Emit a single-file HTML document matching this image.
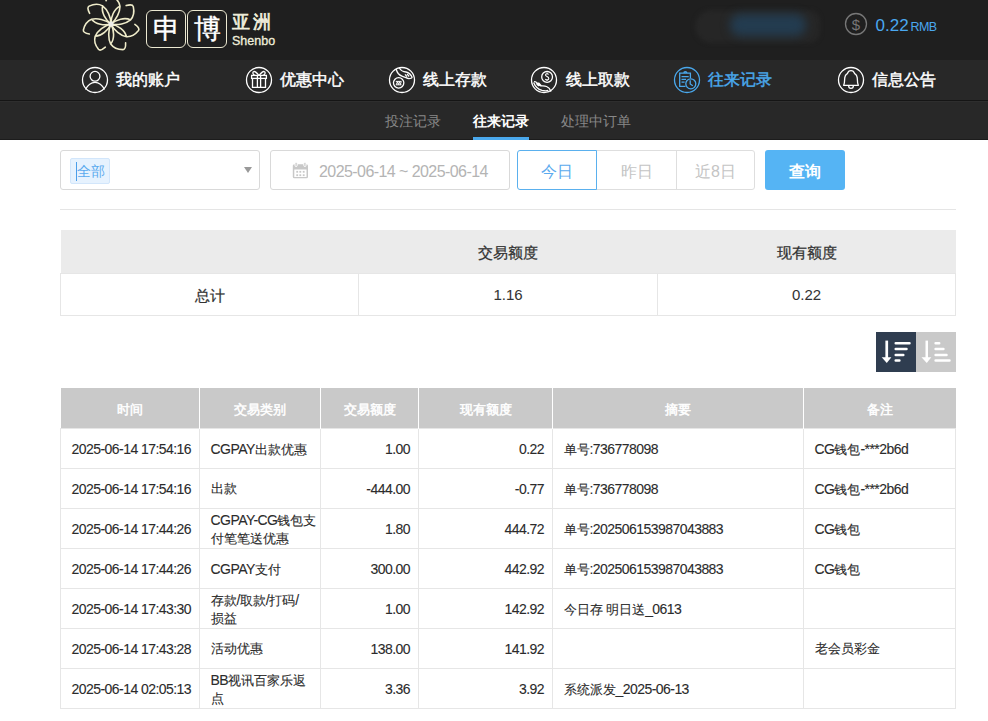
<!DOCTYPE html>
<html><head><meta charset="utf-8">
<style>
*{margin:0;padding:0;box-sizing:border-box}
html,body{width:988px;height:721px;overflow:hidden;background:#fff}
body{font-family:"Liberation Sans",sans-serif;position:relative;color:#333}
.abs{position:absolute}
#hdr{left:0;top:0;width:988px;height:60px;background:#1f1f1f}
#nav{left:0;top:60px;width:988px;height:40px;background:#282828}
#navline{left:0;top:100px;width:988px;height:1px;background:#151515}
#navline2{left:0;top:101px;width:988px;height:1px;background:#2e2e2e}
#sub{left:0;top:102px;width:988px;height:38px;background:#282828}
.box{border:1.3px solid #ece9d2;border-radius:6px;width:40px;height:37.5px;top:10px}
.logoch{color:#fff;font-size:27px;font-weight:normal;-webkit-text-stroke:0.4px #fff;top:11px;line-height:36px;width:40px;text-align:center}
.navi{top:62px;height:36px;line-height:36px;font-size:16px;font-weight:normal;-webkit-text-stroke:0.45px currentColor;color:#fff;white-space:nowrap}
.navi svg{position:absolute;left:0;top:4px}
.navi span{position:absolute;top:0}
.subi{top:102px;height:39px;line-height:39px;font-size:14px;color:#888;white-space:nowrap}
.sel{border:1px solid #d9d9d9;border-radius:3px;height:40px;top:150px}
.btn{top:150px;height:40px;line-height:41px;text-align:center;font-size:16px;color:#c4c4c4;border:1px solid #dedede}
table{border-collapse:collapse;position:absolute;table-layout:fixed}
#sum{left:60px;top:230px;width:895px}
#sum th{-webkit-text-stroke:0.25px #333;background:#ebebeb;height:43px;padding-top:4px;font-size:15px;font-weight:normal;color:#333;text-align:center}
#sum td{-webkit-text-stroke:0.25px #333;height:42px;padding-top:4px;border:1px solid #e6e6e6;font-size:15px;text-align:center;color:#333}
#main{left:60px;top:388px;width:895px}
#main th{background:#c9c9c9;color:#fff;-webkit-text-stroke:0.5px #fff;height:40px;font-size:13px;font-weight:normal;border-left:1.5px solid #fff;text-align:center;padding-top:5px}
#main th:first-child{border-left:none}
#main td{-webkit-text-stroke:0.1px #2b2b2b;height:40px;border:1px solid #e6e6e6;font-size:13px;color:#2b2b2b;padding:2px 11px 0 10.5px;line-height:18px;white-space:nowrap}
#sum td i{font-style:normal;position:relative;top:-2px;-webkit-text-stroke:0.05px #333}
#main td i{font-style:normal;font-size:14px;letter-spacing:-0.55px}
#main td.r{text-align:right;padding-right:8px}
</style></head>
<body>
<div id="hdr" class="abs"></div>
<div id="nav" class="abs"></div>
<div id="navline" class="abs"></div>
<div id="navline2" class="abs"></div>
<div id="sub" class="abs"></div>
<div class="abs" style="left:0;top:139px;width:988px;height:1px;background:#1c1c1c"></div>

<!-- logo flower -->
<svg class="abs" style="left:78px;top:-9px" width="66" height="66" viewBox="-33 -33 66 66">
  
  <g fill="none" stroke="#efecca" stroke-width="1.6" stroke-linecap="round">
  <path d="M0,0 C-3,6 -3,15 -0.3,20 C2.5,24 7,25.6 12,25.6 C14,25.5 14.8,23 14.6,18.9 M0,0 C3.2,6 3.8,15 -0.3,20"/><path d="M0,0 C-3,6 -3,15 -0.3,20 C2.5,24 7,25.6 12,25.6 C14,25.5 14.8,23 14.6,18.9 M0,0 C3.2,6 3.8,15 -0.3,20" transform="rotate(51.43)"/><path d="M0,0 C-3,6 -3,15 -0.3,20 C2.5,24 7,25.6 12,25.6 C14,25.5 14.8,23 14.6,18.9 M0,0 C3.2,6 3.8,15 -0.3,20" transform="rotate(102.86)"/><path d="M0,0 C-3,6 -3,15 -0.3,20 C2.5,24 7,25.6 12,25.6 C14,25.5 14.8,23 14.6,18.9 M0,0 C3.2,6 3.8,15 -0.3,20" transform="rotate(154.29)"/><path d="M0,0 C-3,6 -3,15 -0.3,20 C2.5,24 7,25.6 12,25.6 C14,25.5 14.8,23 14.6,18.9 M0,0 C3.2,6 3.8,15 -0.3,20" transform="rotate(205.71)"/><path d="M0,0 C-3,6 -3,15 -0.3,20 C2.5,24 7,25.6 12,25.6 C14,25.5 14.8,23 14.6,18.9 M0,0 C3.2,6 3.8,15 -0.3,20" transform="rotate(257.14)"/><path d="M0,0 C-3,6 -3,15 -0.3,20 C2.5,24 7,25.6 12,25.6 C14,25.5 14.8,23 14.6,18.9 M0,0 C3.2,6 3.8,15 -0.3,20" transform="rotate(308.57)"/>
  </g>
  <circle cx="0" cy="0" r="2.6" fill="#eeeeea"/>
</svg>
<div class="abs box" style="left:146px"></div>
<div class="abs box" style="left:187px"></div>
<div class="abs logoch" style="left:146px">申</div>
<div class="abs logoch" style="left:187px">博</div>
<div class="abs" style="left:232px;top:10px;font-size:18px;font-weight:500;color:#f1efdc;-webkit-text-stroke:0.7px #f1efdc;letter-spacing:2.5px;line-height:24px">亚洲</div>
<div class="abs" style="left:232px;top:33.5px;font-size:12.5px;color:#f1efdc;line-height:14px;-webkit-text-stroke:0.3px #f1efdc">Shenbo</div>

<!-- header right -->
<div class="abs" style="left:695px;top:10px;width:125px;height:33px;border-radius:17px 12px 12px 17px;background:#262626;filter:blur(2px)"></div>
<div class="abs" style="left:730px;top:14px;width:76px;height:22px;border-radius:11px;background:#233c50;filter:blur(5px)"></div>
<svg class="abs" style="left:844px;top:12px" width="24" height="24" viewBox="0 0 24 24">
  <circle cx="12" cy="12" r="10.5" fill="none" stroke="#777" stroke-width="1.3"/>
  <text x="12" y="17.5" text-anchor="middle" font-size="15" fill="#777" font-family="Liberation Sans">$</text>
</svg>
<div class="abs" style="left:875.5px;top:14px;font-size:17px;color:#4aa8f0;line-height:24px;letter-spacing:0;white-space:nowrap">0.22<span style="font-size:12.5px;letter-spacing:-0.7px;margin-left:2px">RMB</span></div>

<!-- nav -->
<div class="abs navi" style="left:81px;width:100px">
  <svg width="28" height="28" viewBox="0 0 28 28"><g fill="none" stroke="#fff" stroke-width="1.3"><circle cx="14" cy="14" r="12.5"/><circle cx="14" cy="10.3" r="4.9"/><path d="M4.5 23.5 C7 18.5 10.5 16.3 14 16.3 C17.5 16.3 21 18.5 23.5 23.5"/></g></svg>
  <span style="left:35px">我的账户</span>
</div>
<div class="abs navi" style="left:245px;width:100px">
  <svg width="28" height="28" viewBox="0 0 28 28"><g fill="none" stroke="#fff" stroke-width="1.3"><circle cx="14" cy="14" r="12.5"/><rect x="6.6" y="9.4" width="14.8" height="3" /><path d="M7.5,12.4 V21.4 H20.5 V12.4 M12.4,9.4 V21.4 M15.6,9.4 V21.4 M13.8,9.3 C12,7 10,5 8.7,5.6 C7.3,6.2 7.8,8.6 9.8,9.3 M14.2,9.3 C16,7 18,5 19.3,5.6 C20.7,6.2 20.2,8.6 18.2,9.3"/></g></svg>
  <span style="left:35px">优惠中心</span>
</div>
<div class="abs navi" style="left:388px;width:100px">
  <svg width="28" height="28" viewBox="0 0 28 28"><g fill="none" stroke="#fff" stroke-width="1.3"><circle cx="14" cy="14" r="12.5"/><path d="M8.2,3 C9,7 11,9.3 14.5,10.3 C17,11 19,12.6 21,12.6 C22.5,12.6 23.8,12.3 24.2,11.5 M11.3,2 C12.5,4 14.5,5.8 18,6 C20.5,6.5 23,8.5 24.2,11.5 M17,8.3 l2,2.4 M19,7.9 l2.2,2.6"/><circle cx="10.65" cy="16.86" r="5.2"/><path d="M7.8,15.4 H13.5 M7.8,18.8 H13.5 M8.4,18.5 L9.4,15.8 L10.4,18.5 L11.4,15.8 L12.4,18.5 L13.2,15.8" stroke-width="1"/></g></svg>
  <span style="left:35px">线上存款</span>
</div>
<div class="abs navi" style="left:530px;width:100px">
  <svg width="28" height="28" viewBox="0 0 28 28"><g fill="none" stroke="#fff" stroke-width="1.3"><circle cx="14" cy="14" r="12.5"/><circle cx="17.1" cy="10.9" r="5.4"/><path d="M18.6,8.6 C18.2,7.9 17.6,7.7 17,7.7 C16,7.7 15.5,8.3 15.5,9 C15.5,10.8 18.8,10.2 18.8,12.4 C18.8,13.3 18,13.9 17,13.9 C16.2,13.9 15.6,13.5 15.3,12.9 M17.1,6.8 V7.7 M17.1,13.9 V14.9" stroke-width="1.1"/><path d="M3.6,16.4 C5,20 8,23.3 12,24.4 C14.5,25 16.5,25 18.3,24.5 M4,15.8 C5.5,15.2 7.5,17 9.5,19.3 C11.5,20.2 14,19.6 16.5,20.5 C19,21.5 20.3,23.5 20.9,25.6 M6.2,17.2 l2.6,2.8 M8.4,16.6 l2.8,3"/></g></svg>
  <span style="left:36px">线上取款</span>
</div>
<div class="abs navi" style="left:673px;width:100px;color:#4aa8ec">
  <svg width="28" height="28" viewBox="0 0 28 28"><g fill="none" stroke="#4aa8ec" stroke-width="1.3"><circle cx="14" cy="14" r="12.5"/><path d="M12.5,20.4 H6.7 V7.2 H17.4 V12.3 M8.5,10.6 H15.7 M8.5,13.3 H13 M8.5,16.2 H11.6 M10.8,7.2 A1.5,1.6 0 0 1 13.8,7.2"/><circle cx="17.8" cy="17.8" r="5"/><path d="M17.2,14.3 V18 L19.8,19.8"/></g></svg>
  <span style="left:35px">往来记录</span>
</div>
<div class="abs navi" style="left:837px;width:100px">
  <svg width="28" height="28" viewBox="0 0 28 28"><g fill="none" stroke="#fff" stroke-width="1.3"><circle cx="14" cy="14" r="12.5"/><path stroke-linejoin="round" d="M6.6,19.3 H21.4 C20.6,18 20.4,16.5 20.4,14 C20.4,10.5 19.5,8.6 17.6,7.6 C16.9,5.4 15.8,4.7 14,4.7 C12.2,4.7 11.1,5.4 10.4,7.6 C8.5,8.6 7.6,10.5 7.6,14 C7.6,16.5 7.4,18 6.6,19.3 Z M11.6,19.4 C11.6,21 12.6,22.3 14,22.3 C15.4,22.3 16.4,21 16.4,19.4"/></g></svg>
  <span style="left:35px">信息公告</span>
</div>

<!-- subnav -->
<div class="abs subi" style="left:385px">投注记录</div>
<div class="abs subi" style="left:473px;color:#fff;font-weight:bold">往来记录</div>
<div class="abs" style="left:473px;top:137px;width:56px;height:3px;background:#4aa8ec"></div>
<div class="abs subi" style="left:561px">处理中订单</div>

<!-- filter -->
<div class="abs sel" style="left:60px;width:200px"></div>
<div class="abs" style="left:70px;top:158px;width:40px;height:26px;background:#e6f2fe;border:1px solid #d2e6fb;border-radius:2px"></div>
<div class="abs" style="left:76px;top:162px;width:1px;height:19px;background:#4a9eea"></div>
<div class="abs" style="left:77px;top:161px;font-size:13.5px;color:#5aaaee;line-height:22px">全部</div>
<div class="abs" style="left:244px;top:167px;width:0;height:0;border-left:4px solid transparent;border-right:4px solid transparent;border-top:6px solid #999"></div>

<div class="abs sel" style="left:270px;width:240px"></div>
<svg class="abs" style="left:288px;top:158px" width="24" height="24" viewBox="0 0 24 24">
  <rect x="4.8" y="6.2" width="15.2" height="14" rx="1.5" fill="#c8c8c8"/>
  <rect x="6.3" y="11.5" width="12.2" height="7.5" fill="#fff"/>
  <g fill="#c8c8c8"><rect x="8.3" y="12.9" width="1.8" height="1.8"/><rect x="11.4" y="12.9" width="1.8" height="1.8"/><rect x="14.8" y="12.9" width="1.8" height="1.8"/><rect x="8.3" y="16.3" width="1.8" height="1.8"/><rect x="11.4" y="16.3" width="1.8" height="1.8"/><rect x="14.8" y="16.3" width="1.8" height="1.8"/></g>
  <rect x="7" y="4.3" width="2.2" height="4.2" rx="1.1" fill="#c8c8c8" stroke="#fff" stroke-width="1"/>
  <rect x="15.8" y="4.3" width="2.2" height="4.2" rx="1.1" fill="#c8c8c8" stroke="#fff" stroke-width="1"/>
</svg>
<div class="abs" style="left:319px;top:160px;font-size:16px;color:#b4b4b4;line-height:24px;letter-spacing:-0.57px">2025-06-14 ~ 2025-06-14</div>

<div class="abs btn" style="left:517px;width:80px;border-color:#5ab0ee;color:#5aaaee;border-radius:3px 0 0 3px;z-index:2">今日</div>
<div class="abs btn" style="left:596px;width:81px">昨日</div>
<div class="abs btn" style="left:676px;width:79px;border-radius:0 3px 3px 0">近8日</div>
<div class="abs" style="left:765px;top:150px;width:80px;height:40px;line-height:43px;border-radius:3px;background:#55b4f4;color:#fff;font-size:16px;font-weight:bold;text-align:center">查询</div>

<div class="abs" style="left:60px;top:209px;width:896px;height:1px;background:#e5e5e5"></div>

<!-- summary -->
<table id="sum">
<colgroup><col style="width:298px"><col style="width:299px"><col style="width:298px"></colgroup>
<tr><th></th><th>交易额度</th><th>现有额度</th></tr>
<tr><td>总计</td><td><i>1.16</i></td><td><i>0.22</i></td></tr>
</table>

<!-- sort -->
<svg class="abs" style="left:876px;top:332px" width="80" height="40" viewBox="0 0 80 40">
  <rect x="0" y="0" width="40" height="40" fill="#2f3d50"/>
  <rect x="40" y="0" width="40" height="40" fill="#c9c9c9"/>
  <g fill="#fff">
    <rect x="9.4" y="8.6" width="2.7" height="17.5"/><path d="M5.7,25.2 H15.4 L10.75,31 Z"/>
    <rect x="49.5" y="8.6" width="2.5" height="17.5"/><path d="M45.5,25.2 H55.3 L50.75,31 Z"/>
  </g>
  <g stroke="#fff" stroke-width="2.5" stroke-linecap="round">
    <path d="M19.7,11.25 H33.5 M19.7,17 H30.5 M19.7,22.9 H27.3 M19.7,28.6 H23.4"/>
    <path d="M59.6,11.25 H63.2 M59.6,17 H67.4 M59.6,22.9 H70.5 M59.6,28.6 H73.5"/>
  </g>
</svg>

<!-- main table -->
<table id="main">
<colgroup><col style="width:139px"><col style="width:121px"><col style="width:98px"><col style="width:134px"><col style="width:251px"><col style="width:152px"></colgroup>
<tr><th>时间</th><th>交易类别</th><th>交易额度</th><th>现有额度</th><th>摘要</th><th>备注</th></tr>
<tr><td><i>2025-06-14 17:54:16</i></td><td><i>CGPAY</i>出款优惠</td><td class="r"><i>1.00</i></td><td class="r"><i>0.22</i></td><td>单号<i>:736778098</i></td><td><i>CG</i>钱包<i>-***2b6d</i></td></tr>
<tr><td><i>2025-06-14 17:54:16</i></td><td>出款</td><td class="r"><i>-444.00</i></td><td class="r"><i>-0.77</i></td><td>单号<i>:736778098</i></td><td><i>CG</i>钱包<i>-***2b6d</i></td></tr>
<tr><td><i>2025-06-14 17:44:26</i></td><td><i>CGPAY-CG</i>钱包支<br>付笔笔送优惠</td><td class="r"><i>1.80</i></td><td class="r"><i>444.72</i></td><td>单号<i>:202506153987043883</i></td><td><i>CG</i>钱包</td></tr>
<tr><td><i>2025-06-14 17:44:26</i></td><td><i>CGPAY</i>支付</td><td class="r"><i>300.00</i></td><td class="r"><i>442.92</i></td><td>单号<i>:202506153987043883</i></td><td><i>CG</i>钱包</td></tr>
<tr><td><i>2025-06-14 17:43:30</i></td><td>存款<i>/</i>取款<i>/</i>打码<i>/</i><br>损益</td><td class="r"><i>1.00</i></td><td class="r"><i>142.92</i></td><td>今日存 明日送<i>_0613</i></td><td></td></tr>
<tr><td><i>2025-06-14 17:43:28</i></td><td>活动优惠</td><td class="r"><i>138.00</i></td><td class="r"><i>141.92</i></td><td></td><td>老会员彩金</td></tr>
<tr><td><i>2025-06-14 02:05:13</i></td><td><i>BB</i>视讯百家乐返<br>点</td><td class="r"><i>3.36</i></td><td class="r"><i>3.92</i></td><td>系统派发<i>_2025-06-13</i></td><td></td></tr>
</table>
</body></html>
